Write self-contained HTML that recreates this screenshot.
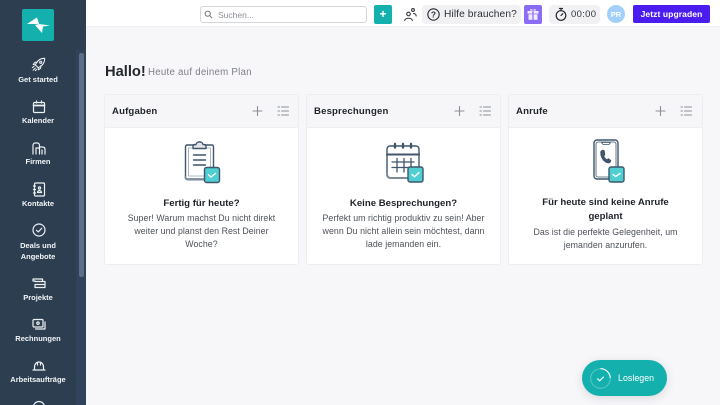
<!DOCTYPE html>
<html lang="de"><head><meta charset="utf-8"><title>Dashboard</title>
<style>
*{box-sizing:border-box;margin:0;padding:0}
html,body{width:720px;height:405px;overflow:hidden;background:#f7f7fa;font-family:"Liberation Sans",sans-serif;color:#1f2329}
.a{position:absolute}
#side{left:0;top:0;width:86px;height:405px;background:#2c3e50;overflow:hidden}
#logo{left:22px;top:9px;width:32px;height:32px;background:#14b0ad;border-radius:2px}
.nav{position:absolute;left:0;width:76px;text-align:center;color:#f2f4f6;font-size:7.5px;line-height:10.5px;font-weight:bold;letter-spacing:0;transform:translateY(1px)}
.ic{position:absolute;fill:none;stroke:#eef1f4;stroke-width:1.2;stroke-linecap:round;stroke-linejoin:round}
#track{left:76px;top:50px;width:10px;height:355px;background:#30435a}
#thumb{left:79px;top:53px;width:5px;height:224px;background:#5d6f85;border-radius:2px}
#top{left:86px;top:0;width:634px;height:27px;background:#fff;border-bottom:1px solid #eeeef1}
#search{left:200px;top:6px;width:167px;height:17px;border:1px solid #d4d6da;border-radius:3px;background:#fff;font-size:8.5px;color:#8a8f96;padding:2.5px 0 0 17px;letter-spacing:0}
.pill{position:absolute;background:#f1f1f3;border-radius:4px;top:5px;height:19px}
.card{position:absolute;top:94px;height:171px;background:#fff;border:1px solid #eeeef2;border-radius:3px;overflow:hidden}
.head{position:absolute;left:0;top:0;right:0;height:33px;background:#f6f6f9;border-bottom:1px solid #efeff3;font-size:9.6px;font-weight:bold;line-height:33px;padding-left:7px;letter-spacing:.15px;color:#22262b}
.t{position:absolute;left:0;right:0;text-align:center;font-size:9.6px;line-height:14px;font-weight:bold;color:#1f2329;letter-spacing:0}
.d{position:absolute;left:0;right:0;text-align:center;font-size:8.8px;line-height:13px;color:#4d5258;letter-spacing:.05px}
.hi{fill:none;stroke:#8b9097;stroke-width:1.1;stroke-linecap:round}
.il{position:absolute;fill:none;stroke:#3f566c;stroke-width:1.4;stroke-linecap:round;stroke-linejoin:round}
</style></head><body>

<div class="a" id="side">
<div class="a" id="logo"><svg width="32" height="32" viewBox="0 0 32 32"><path d="M5 15 15 8.500 17 15Z" fill="#fff"/><path d="M15 8.500 20 23 17 15Z" fill="#dff"/><path d="M13 16 20 24 21 17.500 28 16.500 17 15Z" fill="#fff"/></svg></div>

<svg class="ic" style="left:31px;top:57px" width="15" height="15" viewBox="0 0 17 17"><path d="M5 9 C7 4 11 1.500 15.500 1.500 C15.500 6 13 10 8 12Z"/><path d="M5 9 2.500 8.500 4.500 6 7 6M8 12 8.500 14.500 11 12.500 11 10"/><circle cx="11" cy="6" r="1.200"/><path d="M1.500 12 3.500 10.500M2.500 15 5 12.500M5 15.500 6.500 14"/></svg>
<div class="nav" style="top:74px">Get started</div>

<svg class="ic" style="left:32px;top:100px" width="14" height="14" viewBox="0 0 14 14"><rect x="1.500" y="2.500" width="11" height="10" rx="1"/><path d="M1.500 5.500H12.500" stroke-width="1.800"/><path d="M4.500 1V3M9.500 1V3"/></svg>
<div class="nav" style="top:115px">Kalender</div>

<svg class="ic" style="left:32px;top:141px" width="14" height="14" viewBox="0 0 14 14"><path d="M1 13V4.500C1 3 2 2 3 2H5.500C6.500 2 7.500 3 7.500 4.500V13M4 13V7H7.500M7.500 6H10.500C12 6 13 7 13 8.500V13M10 9V13"/></svg>
<div class="nav" style="top:156px">Firmen</div>

<svg class="ic" style="left:32px;top:182px" width="14" height="15" viewBox="0 0 14 15"><rect x="2.500" y="1" width="10" height="13" rx="1"/><circle cx="7.500" cy="6" r="1.100"/><path d="M5.500 10.500C5.500 8 9.500 8 9.500 10.500ZM1.500 4H3.500M1.500 7.500H3.500M1.500 11H3.500"/></svg>
<div class="nav" style="top:198px">Kontakte</div>

<svg class="ic" style="left:32px;top:223px" width="14" height="14" viewBox="0 0 14 14"><circle cx="7" cy="7" r="6"/><path d="M4.500 7.300 6.300 9 9.700 5.300"/></svg>
<div class="nav" style="top:240px;line-height:10.500px">Deals und<br>Angebote</div>

<svg class="ic" style="left:32px;top:277px" width="14" height="13" viewBox="0 0 14 13"><path d="M1 2H10.500V4M3 4.500H13V10.500H3V7.500H13M1 2V4H3"/></svg>
<div class="nav" style="top:292px">Projekte</div>

<svg class="ic" style="left:32px;top:318px" width="14" height="13" viewBox="0 0 14 13"><rect x="1" y="1.500" width="10" height="7.500" rx="1"/><circle cx="6" cy="5.200" r="1.200"/><path d="M13 4V11H3.500"/></svg>
<div class="nav" style="top:333px">Rechnungen</div>

<svg class="ic" style="left:32px;top:359px" width="14" height="13" viewBox="0 0 14 13"><path d="M1 11H13M2.500 11V8C2.500 5 4.500 3 7 3C9.500 3 11.500 5 11.500 8V11M5.500 3.500V6M8.500 3.500V6"/></svg>
<div class="nav" style="top:374px">Arbeitsaufträge</div>

<svg class="ic" style="left:32px;top:400px" width="14" height="14" viewBox="0 0 14 14"><circle cx="7" cy="7" r="5.500"/></svg>
<div class="a" id="track"></div><div class="a" id="thumb"></div>
</div>

<div class="a" id="top"></div>
<div class="a" id="search">Suchen...</div>
<svg class="a" style="left:204px;top:10px" width="9" height="9" viewBox="0 0 9 9"><circle cx="3.700" cy="3.700" r="2.600" fill="none" stroke="#777" stroke-width="1"/><path d="M5.700 5.700 8 8" stroke="#777" stroke-width="1"/></svg>
<div class="a" style="left:374px;top:5px;width:18px;height:19px;background:#14b0ad;border-radius:2px;color:#fff;text-align:center;font-size:12px;font-weight:bold;line-height:18px">+</div>
<svg class="a" style="left:403px;top:7px" width="15" height="15" viewBox="0 0 14 15" fill="none" stroke="#34383e" stroke-width="1.100" stroke-linecap="round"><circle cx="5" cy="7" r="1.800"/><path d="M1.200 13.500C1.500 10.500 8.500 10.500 8.800 13.500"/><circle cx="9.500" cy="3" r="1.400"/><path d="M10 6.500C11.500 6.500 12.500 7.500 12.700 9"/></svg>
<div class="pill" style="left:422px;width:99px"></div>
<svg class="a" style="left:427px;top:8px" width="13" height="13" viewBox="0 0 13 13"><circle cx="6.500" cy="6.500" r="5.700" fill="none" stroke="#2b2f34" stroke-width="1.100"/><text x="6.500" y="9.500" text-anchor="middle" font-size="8.500" font-weight="bold" fill="#2b2f34" font-family="Liberation Sans">?</text></svg>
<div class="a" style="left:444px;top:8px;font-size:10.200px;line-height:14px;color:#2c3036;letter-spacing:.1px">Hilfe brauchen?</div>
<div class="a" style="left:524px;top:5px;width:18px;height:19px;background:#8b6cf6;border-radius:2px"><svg width="18" height="19" viewBox="0 0 18 19" fill="#efeaff"><rect x="3.500" y="6" width="11" height="2.600"/><rect x="4.500" y="9.300" width="9" height="5.500"/><path d="M6 5.500C6 3.500 8.500 4 9 5.500C9.500 4 12 3.500 12 5.500Z"/><rect x="8.400" y="6" width="1.200" height="9" fill="#8b6cf6"/></svg></div>
<div class="pill" style="left:549px;width:51px"></div>
<svg class="a" style="left:554px;top:7px" width="14" height="15" viewBox="0 0 14 15" fill="none" stroke="#25282c" stroke-width="1.200" stroke-linecap="round"><circle cx="7" cy="8.500" r="4.800"/><path d="M5.500 1.500H8.500M7 2V3.500M7 8.500 8.800 6.700"/></svg>
<div class="a" style="left:571px;top:8px;font-size:9.500px;line-height:13px;color:#33373c;letter-spacing:.3px">00:00</div>
<div class="a" style="left:607px;top:5px;width:18px;height:18px;border-radius:50%;background:#a3d0fb;color:#fff;font-size:7.500px;font-weight:bold;text-align:center;line-height:19px">PR</div>
<div class="a" style="left:633px;top:5px;width:77px;height:18px;background:#4a1cf0;border-radius:2px;color:#fff;font-size:8.500px;font-weight:bold;text-align:center;line-height:18px;letter-spacing:.1px">Jetzt upgraden</div>

<div class="a" style="left:105px;top:63px;font-size:14.700px;line-height:18px;font-weight:bold;color:#24272b">Hallo!</div>
<div class="a" style="left:148px;top:66px;font-size:9.700px;line-height:13px;color:#7c8187;letter-spacing:.25px">Heute auf deinem Plan</div>

<div class="card" style="left:104px;width:195px">
<div class="head">Aufgaben</div>
<svg class="a" style="left:147px;top:10px" width="40" height="12" viewBox="0 0 40 12"><path class="hi" d="M1 6H10M5.500 1.500V10.500"/><path class="hi" d="M29.500 2H36.500M29.500 6H36.500M29.500 10H36.500M26 2H27.500M26 6H27.500M26 10H27.500" stroke-width="1.300"/></svg>
<svg class="il" style="left:78px;top:45px" width="38" height="44" viewBox="0 0 38 44"><rect x="2.500" y="5" width="28" height="34" rx="1.500"/><path d="M2.500 37C2.500 39 3 39.500 5 39.500H22" stroke="#7b8a99" stroke-width="2"/><rect x="5.500" y="8" width="22" height="28" fill="#fff" stroke="#9aa6b2" stroke-width=".8"/><path d="M10 6V8.500H23V6C23 5 22 4.500 20 4.500C19.500 1 13.500 1 13 4.500C11 4.500 10 5 10 6Z" fill="#e4e6ea"/><path d="M10.500 15H22.500M10.500 20H22.500M10.500 25H22.500"/><rect x="21.500" y="27.500" width="15" height="15" rx="2" fill="#4fcfd1"/><path d="M25.500 34.800 28 37 32.500 33.500" stroke="#fff"/></svg>
<div class="t" style="top:102px">Fertig für heute?</div>
<div class="d" style="top:117px">Super! Warum machst Du nicht direkt<br>weiter und planst den Rest Deiner<br>Woche?</div>
</div>

<div class="card" style="left:306px;width:195px">
<div class="head">Besprechungen</div>
<svg class="a" style="left:147px;top:10px" width="40" height="12" viewBox="0 0 40 12"><path class="hi" d="M1 6H10M5.500 1.500V10.500"/><path class="hi" d="M29.500 2H36.500M29.500 6H36.500M29.500 10H36.500M26 2H27.500M26 6H27.500M26 10H27.500" stroke-width="1.300"/></svg>
<svg class="il" style="left:78px;top:46px" width="40" height="42" viewBox="0 0 40 42"><rect x="2" y="5" width="32" height="32" rx="3"/><path d="M2 13.500H34" stroke-width="2"/><path d="M2 33C2 36 4 37 6 37H24" stroke="#7b8a99" stroke-width="2"/><path d="M10 3V6.500M18 3V6.500M26 3V6.500" stroke-width="2.400"/><path d="M7 21H29M7 26.500H26M12 17.500V31M19 17.500V31M26 17.500V25" stroke-width="1.300"/><rect x="23" y="26" width="15" height="15" rx="2" fill="#4fcfd1"/><path d="M27 33.500 29.500 35.800 34 31.500" stroke="#fff"/></svg>
<div class="t" style="top:102px">Keine Besprechungen?</div>
<div class="d" style="top:117px">Perfekt um richtig produktiv zu sein! Aber<br>wenn Du nicht allein sein möchtest, dann<br>lade jemanden ein.</div>
</div>

<div class="card" style="left:508px;width:195px">
<div class="head">Anrufe</div>
<svg class="a" style="left:146px;top:10px" width="40" height="12" viewBox="0 0 40 12"><path class="hi" d="M1 6H10M5.500 1.500V10.500"/><path class="hi" d="M29.500 2H36.500M29.500 6H36.500M29.500 10H36.500M26 2H27.500M26 6H27.500M26 10H27.500" stroke-width="1.300"/></svg>
<svg class="il" style="left:84px;top:44px" width="34" height="46" viewBox="0 0 34 46"><rect x="1" y="1" width="24" height="39" rx="3"/><rect x="3" y="3" width="20" height="35" rx="2" stroke-width=".8"/><path d="M8.500 3.500H17.500L16 5.500H10Z" stroke-width=".8"/><path d="M8 13.500C8 11.500 10.500 11 11 12L11.500 15.500C11 16.500 10.500 16.500 10.500 17C11 19 13 20.500 14 21C15 20.500 15 20 15.500 20L17.500 21.500C17.500 23 16 24 14.500 23.500C10.500 22.500 8 18 8 13.500Z" fill="#3f566c"/><rect x="16" y="28" width="15" height="15" rx="2" fill="#4fcfd1"/><path d="M20 35.500 22.500 37.500 27 34.500" stroke="#fff"/></svg>
<div class="t" style="top:101px">Für heute sind keine Anrufe<br>geplant</div>
<div class="d" style="top:131px">Das ist die perfekte Gelegenheit, um<br>jemanden anzurufen.</div>
</div>

<div class="a" style="left:582px;top:360px;width:85px;height:36px;border-radius:18px;background:#14b0ad;box-shadow:0 2px 10px rgba(0,0,0,.12)"></div>
<svg class="a" style="left:589px;top:367px" width="23" height="23" viewBox="0 0 23 23" fill="none"><circle cx="11.500" cy="11.500" r="9.800" stroke="#5cc9c7" stroke-width="1"/><path d="M11.500 1.700A9.800 9.800 0 0 1 21.300 11" stroke="#fff" stroke-width="1.100"/><path d="M8.500 11.800 10.700 13.800 14.500 10" stroke="#fff" stroke-width="1.100" stroke-linecap="round"/></svg>
<div class="a" style="left:618px;top:371px;font-size:8.800px;line-height:14px;color:#fff;letter-spacing:.05px">Loslegen</div>
</body></html>
